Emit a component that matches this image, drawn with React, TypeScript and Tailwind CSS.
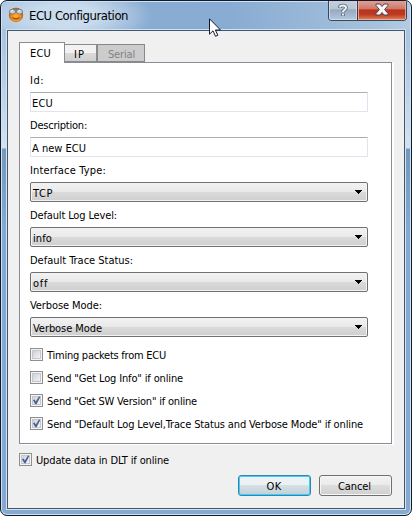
import React from "react";

function Label({ children, w }: { children: string; w: number }) {
  return (
    <div className="h-[25px] pt-[7px] text-[11px] leading-[14px] whitespace-nowrap">
      <Fit w={w}>{children}</Fit>
    </div>
  );
}

// Spaces the letters so that a string fills its measured Windows width.
function Fit({ children, w }: { children: string; w: number }) {
  const ref = React.useRef<HTMLSpanElement>(null);
  React.useLayoutEffect(() => {
    const el = ref.current!;
    el.style.letterSpacing = "0px";
    const natural = el.getBoundingClientRect().width;
    el.style.letterSpacing = `${(w - natural) / children.length}px`;
  }, [children, w]);
  return (
    <span ref={ref} className="inline-block whitespace-pre">
      {children}
    </span>
  );
}

function Input({ text, w }: { text: string; w: number }) {
  return (
    <div className="h-5 rounded-[1px] border border-[#e1e4ec] border-t-[#abadb3] bg-white pl-px pt-[4px] text-[11px] leading-[14px]">
      <Fit w={w}>{text}</Fit>
    </div>
  );
}

function Select({ text, w }: { text: string; w: number }) {
  return (
    <div className="flex h-5 justify-between rounded-[2px] border border-[#707070] bg-[linear-gradient(#f2f2f2,#e9e9e9_48%,#dadada_52%,#cfcfcf)] pl-[2px] pr-[5px] pt-[4px] text-[11px] leading-[14px] shadow-[inset_0_0_0_1px_#f3f3f3]">
      <Fit w={w}>{text}</Fit>
      <svg width="7" height="4" viewBox="0 0 7 4" className="mt-[3px]" shapeRendering="crispEdges">
        <path d="M0 0h7v1H6v1H5v1H4v1H3V3H2V2H1V1H0z" fill="#000" />
      </svg>
    </div>
  );
}

function Check({ text, w, on }: { text: string; w: number; on?: boolean }) {
  return (
    <div className="flex h-[23px] items-start text-[11px] leading-[16px]">
      <svg width="13" height="13" viewBox="0 0 13 13" className="mr-[4px] shrink-0">
        <defs>
          <linearGradient id="well" x1="0" y1="0" x2="1" y2="1">
            <stop offset="0" stopColor="#cbcfd5" />
            <stop offset="1" stopColor="#f6f6f6" />
          </linearGradient>
        </defs>
        <rect x=".5" y=".5" width="12" height="12" fill="#f4f4f4" stroke="#8e8f8f" />
        <rect x="2.5" y="2.5" width="8" height="8" fill="url(#well)" stroke="#c4c8cc" />
        {on && <path d="M3 6.2 4.6 5.6 5.8 7.6 9 2.4 10.3 3 6.5 10.3 5.3 10.3z" fill="#4a5f97" />}
      </svg>
      <Fit w={w}>{text}</Fit>
    </div>
  );
}

function FaceIcon() {
  return (
    <svg width="16" height="16" viewBox="0 0 16 16">
      <defs>
        <radialGradient id="face" cx=".5" cy=".6" r=".55">
          <stop offset="0" stopColor="#ffb840" />
          <stop offset=".6" stopColor="#ec8a20" />
          <stop offset="1" stopColor="#a04f10" />
        </radialGradient>
      </defs>
      <circle cx="8" cy="8" r="7.2" fill="url(#face)" />
      <path d="M2 3.5Q8-2 14 3.5L13 5H3z" fill="#8b7558" />
      <ellipse cx="4.5" cy="4.7" rx="3.1" ry="2.4" fill="#c3cccb" stroke="#70706a" strokeWidth=".8" />
      <ellipse cx="11.5" cy="4.7" rx="3.1" ry="2.4" fill="#c3cccb" stroke="#70706a" strokeWidth=".8" />
      <path d="M3 4.3 5 3.3M10.2 4.3l2-1" stroke="#fff" />
      <path d="M4.5 10.7q3.5 2.6 7 0" fill="none" stroke="#793306" strokeWidth="1" />
    </svg>
  );
}

function CaptionButtons() {
  return (
    <div className="mr-[3px] flex h-5 overflow-hidden rounded-b-[4px] border border-t-0 border-[#3d4655]">
      <div className="flex w-7 justify-center border border-t-0 border-[#d3dfeb]/80 bg-[linear-gradient(#c3cfdd,#b6c4d4_46%,#94a8bf_48%,#b0c6dc)] pt-[2px]">
        <svg width="12" height="14" viewBox="0 0 12 14">
          <path d="M3 5V4Q3 2.5 6 2.5T9 5Q9 6 7 7.3Q6 8 6 9.3M6 10.6V13" fill="none" stroke="#5c6678" strokeWidth="3.6" />
          <path d="M3 4.6V4Q3 2.5 6 2.5T9 5Q9 6 7 7.3Q6 8 6 9.3M6 10.8V12.6" fill="none" stroke="#f0f0f3" strokeWidth="2" />
        </svg>
      </div>
      <div className="w-px bg-[#4a3440]" />
      <div className="flex w-12 justify-center border border-t-0 border-[#eab4a5]/80 bg-[linear-gradient(#dfa096_0%,#cf7565_46%,#b8321c_48%,#bd3a22_75%,#d97853_100%)] pt-[2px]">
        <svg width="14" height="13" viewBox="0 0 14 13">
          <path d="M1 1H5L7 3.5 9 1H13V2.5L9.6 6.5 13 10.5V12H9L7 9.5 5 12H1V10.5L4.4 6.5 1 2.5z" fill="#f7f7f7" stroke="#54434e" strokeWidth="1" />
        </svg>
      </div>
    </div>
  );
}

export default function App() {
  return (
    <div className="h-[516px] w-[412px] bg-white font-['DejaVu_Sans_Condensed','DejaVu_Sans',sans-serif] text-black">
      <div className="relative flex h-full flex-col overflow-hidden rounded-[7px] border border-[#15192b] bg-[linear-gradient(#a6c1dd_0px,#a9c3df_30px,#b5cce4_70px,#d5e1ef_147px,#7497bc_148px,#86a9cf_230px,#86a9cf_100%)] shadow-[inset_0_0_0_1px_#c9e4f4]">
        <div className="mx-px mt-px flex h-[27px] shrink-0 items-start bg-[radial-gradient(ellipse_90px_32px_at_62px_14px,#c9dcee_35%,transparent_100%),linear-gradient(90deg,#a4bfdc_0px,#88abd1_145px,#89acd2_230px,#a5c1dc_370px,#b3cbe3_100%)] pl-[6px]">
          <div className="mt-[5px]">
            <FaceIcon />
          </div>
          <div className="ml-[5px] mt-[6px] grow text-[13px] leading-4">
            <Fit w={99}>ECU Configuration</Fit>
          </div>
          <div className="-mt-px">
            <CaptionButtons />
          </div>
        </div>

        <div className="mx-[5px] h-[481px] shrink-0 border border-[#cfe3f2]">
          <div className="flex h-full flex-col border border-[#43566b] bg-[#f0f0f0]">
            <div className="ml-[11px] mt-[11px] flex h-5 shrink-0 items-start text-[11px] leading-[14px]">
              <div className="relative z-10 h-[21px] w-[46px] border border-b-0 border-[#8b8b97] bg-white pl-[10px] pt-[4px]">
                <Fit w={21}>ECU</Fit>
              </div>
              <div className="mt-[2px] h-[18px] w-[32px] border border-l-0 border-[#8b8b8b] bg-[linear-gradient(#f2f2f2_50%,#dadada_50%,#d0d0d0)] pl-[9px] pt-[3px]">
                <Fit w={11}>IP</Fit>
              </div>
              <div className="mt-[2px] h-[18px] w-12 border border-[#888] bg-[#cccccc] pl-[10px] pt-[3px] text-[#838383]">
                <Fit w={27}>Serial</Fit>
              </div>
            </div>

            <div className="ml-[11px] h-[382px] w-[373px] shrink-0 border border-[#8b8b97] bg-white pl-[10px] pt-[4px] shadow-[2px_1px_0_#fff]">
              <div className="w-[338px]">
                <Label w={14}>Id:</Label>
                <Input text="ECU" w={21} />
                <Label w={57}>Description:</Label>
                <Input text="A new ECU" w={54} />
                <Label w={76}>Interface Type:</Label>
                <Select text="TCP" w={20} />
                <Label w={87}>Default Log Level:</Label>
                <Select text="info" w={19} />
                <Label w={103}>Default Trace Status:</Label>
                <Select text="off" w={15} />
                <Label w={72}>Verbose Mode:</Label>
                <Select text="Verbose Mode" w={69} />
              </div>
              <div className="mt-[11px]">
                <Check text="Timing packets from ECU" w={119} />
                <Check text={'Send "Get Log Info" if online'} w={136} />
                <Check text={'Send "Get SW Version" if online'} w={150} on />
                <Check text={'Send "Default Log Level,Trace Status and Verbose Mode" if online'} w={316} on />
              </div>
            </div>

            <div className="ml-[11px] mt-[9px] h-[22px] shrink-0">
              <Check text="Update data in DLT if online" w={133} on />
            </div>

            <div className="mr-3 flex justify-end gap-2 text-[11px] leading-[14px]">
              <div className="h-[21px] w-[73px] rounded-[3px] border border-[#3c7fb1] bg-[linear-gradient(#edf1f3_48%,#d6e0e5_50%,#c0d0d8)] pr-px pt-[4px] text-center shadow-[inset_0_0_0_1px_#35d3f8]">
                <Fit w={15}>OK</Fit>
              </div>
              <div className="h-[21px] w-[73px] rounded-[3px] border border-[#707070] bg-[linear-gradient(#f2f2f2,#ebebeb_48%,#dddddd_50%,#cfcfcf)] pr-[2px] pt-[4px] text-center shadow-[inset_0_0_0_1px_#f6f6f6]">
                <Fit w={33}>Cancel</Fit>
              </div>
            </div>
          </div>
        </div>

        <svg width="13" height="20" viewBox="0 0 13 20" className="absolute left-[208px] top-[17px] z-20">
          <path d="M.5.8V16.2L4 12.8 6.5 18.3 8.8 17.3 6.4 12H11.5z" fill="#fff" stroke="#171b31" strokeWidth="1" />
        </svg>
      </div>
    </div>
  );
}
